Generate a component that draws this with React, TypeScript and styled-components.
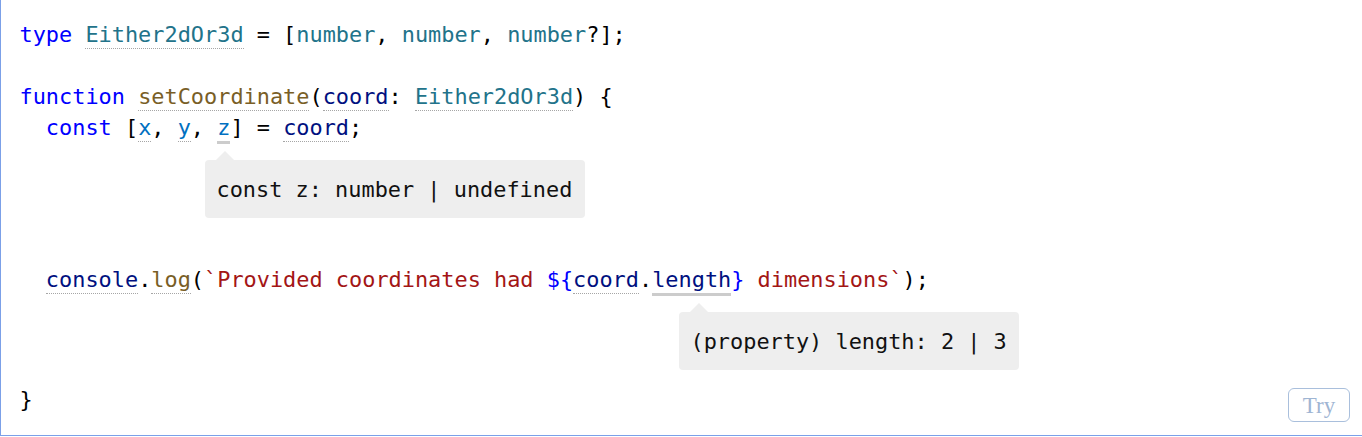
import React from "react";
import styled, { createGlobalStyle } from "styled-components";

const Global = createGlobalStyle`
  html, body { margin: 0; padding: 0; background: #fff; }
  body { font-family: "DejaVu Sans Mono", monospace; }
`;

const Frame = styled.div`
  position: relative;
  box-sizing: border-box;
  width: 1362px;
  height: 436px;
  border-left: 1.5px solid #7ba0e8;
  border-bottom: 1.5px solid #7ba0e8;
  padding: 18.5px 0 0 18.5px;
  font-family: "DejaVu Sans Mono", monospace;
  font-size: 21.9px;
  color: #000;
`;

const Line = styled.div`
  white-space: pre;
  line-height: 31.3px;
  height: 31.3px;
`;

type Tone = "kw" | "type" | "fn" | "id" | "var" | "str" | "plain";
const tones: Record<Tone, string> = {
  kw: "#0000ff",
  type: "#22738a",
  fn: "#795e26",
  id: "#001080",
  var: "#0070c1",
  str: "#a31515",
  plain: "#000000",
};

const Tok = styled.span<{ $t: Tone; $dot?: boolean; $hl?: boolean }>`
  color: ${(p) => tones[p.$t]};
  ${(p) => (p.$dot ? "border-bottom: 1px dotted #a6a6a6; padding-bottom: 1px;" : "")}
  ${(p) => (p.$hl ? "border-bottom: 3px solid #cccccc; padding-bottom: 1px;" : "")}
`;

const PopRow = styled.div<{ $indent: number; $after: number }>`
  padding-top: 16.4px;
  padding-bottom: 14.3px;
  padding-left: ${(p) => p.$indent}px;
  margin-bottom: ${(p) => p.$after}px;
  display: flex;
`;

const Pop = styled.div`
  position: relative;
  background: #eeeeee;
  border-radius: 4px;
  padding: 13.5px 12.5px 13.5px 11.5px;
  line-height: 31px;
  white-space: pre;
  color: #111;
  &::before {
    content: "";
    position: absolute;
    left: 11px;
    top: -9px;
    border-left: 9px solid transparent;
    border-right: 9px solid transparent;
    border-bottom: 9px solid #eeeeee;
  }
`;

const TryButton = styled.button`
  position: absolute;
  right: 12px;
  bottom: 13px;
  width: 62px;
  height: 34px;
  box-sizing: border-box;
  background: #fff;
  border: 1px solid #a9bfdc;
  border-radius: 6px;
  color: #9fb5d3;
  font-family: "Liberation Serif", serif;
  font-size: 23px;
  line-height: 1;
  padding: 0;
  cursor: pointer;
`;

export default function App() {
  return (
    <>
      <Global />
      <Frame>
        <Line>
          <Tok $t="kw">type</Tok> <Tok $t="type" $dot>Either2dOr3d</Tok> = [
          <Tok $t="type">number</Tok>, <Tok $t="type">number</Tok>, <Tok $t="type">number</Tok>?];
        </Line>
        <Line> </Line>
        <Line>
          <Tok $t="kw">function</Tok> <Tok $t="fn" $dot>setCoordinate</Tok>(
          <Tok $t="id" $dot>coord</Tok>: <Tok $t="type" $dot>Either2dOr3d</Tok>) {"{"}
        </Line>
        <Line>
          {"  "}
          <Tok $t="kw">const</Tok> [<Tok $t="var" $dot>x</Tok>, <Tok $t="var" $dot>y</Tok>,{" "}
          <Tok $t="var" $hl>z</Tok>] = <Tok $t="id" $dot>coord</Tok>;
        </Line>
        <PopRow $indent={185.5} $after={32}>
          <Pop>const z: number | undefined</Pop>
        </PopRow>
        <Line>
          {"  "}
          <Tok $t="id" $dot>console</Tok>.<Tok $t="fn" $dot>log</Tok>(
          <Tok $t="str">`Provided coordinates had </Tok>
          <Tok $t="kw">{"${"}</Tok>
          <Tok $t="id" $dot>coord</Tok>.<Tok $t="id" $hl>length</Tok>
          <Tok $t="kw">{"}"}</Tok>
          <Tok $t="str"> dimensions`</Tok>);
        </Line>
        <PopRow $indent={659.5} $after={0}>
          <Pop>(property) length: 2 | 3</Pop>
        </PopRow>
        <Line>{"}"}</Line>
        <TryButton>Try</TryButton>
      </Frame>
    </>
  );
}
